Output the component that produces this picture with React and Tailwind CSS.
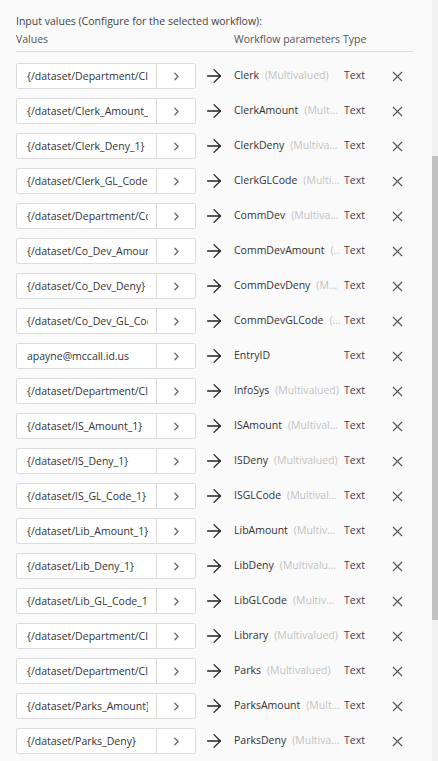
import React from 'react';
import { ArrowRight, ChevronRight, X } from 'lucide-react';

const rows = [
  { value: '{/dataset/Department/Clerk}', param: 'Clerk', multi: true },
  { value: '{/dataset/Clerk_Amount_1}', param: 'ClerkAmount', multi: true },
  { value: '{/dataset/Clerk_Deny_1}', param: 'ClerkDeny', multi: true },
  { value: '{/dataset/Clerk_GL_Code_1}', param: 'ClerkGLCode', multi: true },
  { value: '{/dataset/Department/CommDev}', param: 'CommDev', multi: true },
  { value: '{/dataset/Co_Dev_Amount_1}', param: 'CommDevAmount', multi: true },
  { value: '{/dataset/Co_Dev_Deny}', param: 'CommDevDeny', multi: true },
  { value: '{/dataset/Co_Dev_GL_Code_1}', param: 'CommDevGLCode', multi: true },
  { value: 'apayne@mccall.id.us', param: 'EntryID', multi: false },
  { value: '{/dataset/Department/Clerk}', param: 'InfoSys', multi: true },
  { value: '{/dataset/IS_Amount_1}', param: 'ISAmount', multi: true },
  { value: '{/dataset/IS_Deny_1}', param: 'ISDeny', multi: true },
  { value: '{/dataset/IS_GL_Code_1}', param: 'ISGLCode', multi: true },
  { value: '{/dataset/Lib_Amount_1}', param: 'LibAmount', multi: true },
  { value: '{/dataset/Lib_Deny_1}', param: 'LibDeny', multi: true },
  { value: '{/dataset/Lib_GL_Code_1}', param: 'LibGLCode', multi: true },
  { value: '{/dataset/Department/Clerk}', param: 'Library', multi: true },
  { value: '{/dataset/Department/Clerk}', param: 'Parks', multi: true },
  { value: '{/dataset/Parks_Amount}', param: 'ParksAmount', multi: true },
  { value: '{/dataset/Parks_Deny}', param: 'ParksDeny', multi: true },
];

const ParamRow = ({ row }) => (
  <div className="flex items-center h-[26px]">
    <div className="flex w-[180px] h-[26px] shrink-0 border border-[#dcdcdc] rounded-[2px] bg-white">
      <div className="w-[139px] whitespace-nowrap pl-[10px] pr-[8px] leading-[24px] text-[#333]">
        <div className="overflow-hidden">{row.value}</div>
      </div>
      <div className="flex-1 flex items-center justify-center border-l border-[#dcdcdc]">
        <ChevronRight size={13} strokeWidth={2.4} className="text-[#666]" />
      </div>
    </div>
    <div className="w-[38px] shrink-0 flex justify-center pr-[2px]">
      <ArrowRight size={22} strokeWidth={1.4} className="text-[#222]" />
    </div>
    <div className="w-[110px] shrink-0 flex min-w-0 overflow-hidden whitespace-nowrap pr-[4px]">
      <span className="shrink-0 text-[#333]">{row.param}</span>
      {row.multi && (
        <span className="min-w-0 truncate pl-[6px] text-[#c2c2c2]">(Multivalued)</span>
      )}
    </div>
    <div className="w-[42px] shrink-0 text-[#4a3a46]">Text</div>
    <div className="w-[22px] shrink-0 flex justify-center">
      <X size={17} strokeWidth={1.5} className="text-[#555]" />
    </div>
  </div>
);

const App = () => {
  return (
    <div
      className="flex w-[438px] h-[761px] overflow-hidden bg-[#fafafa] text-[10.5px]"
      style={{ fontFamily: '"Open Sans", "Noto Sans", sans-serif' }}
    >
      <div className="flex-1 pl-4 pr-[19px] pt-[12px]">
        <div className="text-[#444] leading-[18px] whitespace-nowrap">
          Input values (Configure for the selected workflow):
        </div>
        <div className="flex text-[#555] leading-[18px] border-b border-[#dedede] pb-[3px] whitespace-nowrap">
          <div className="w-[218px]">Values</div>
          <div className="w-[109px]">Workflow parameters</div>
          <div>Type</div>
        </div>
        <div className="flex flex-col gap-[9px] pt-[11px]">
          {rows.map((row) => (
            <ParamRow key={row.param} row={row} />
          ))}
        </div>
      </div>
      <div className="w-[6px] shrink-0 flex flex-col bg-[#f1f1f1]">
        <div className="h-[156px]" />
        <div className="h-[464px] bg-[#c1c1c1]" />
      </div>
    </div>
  );
};

export default App;
